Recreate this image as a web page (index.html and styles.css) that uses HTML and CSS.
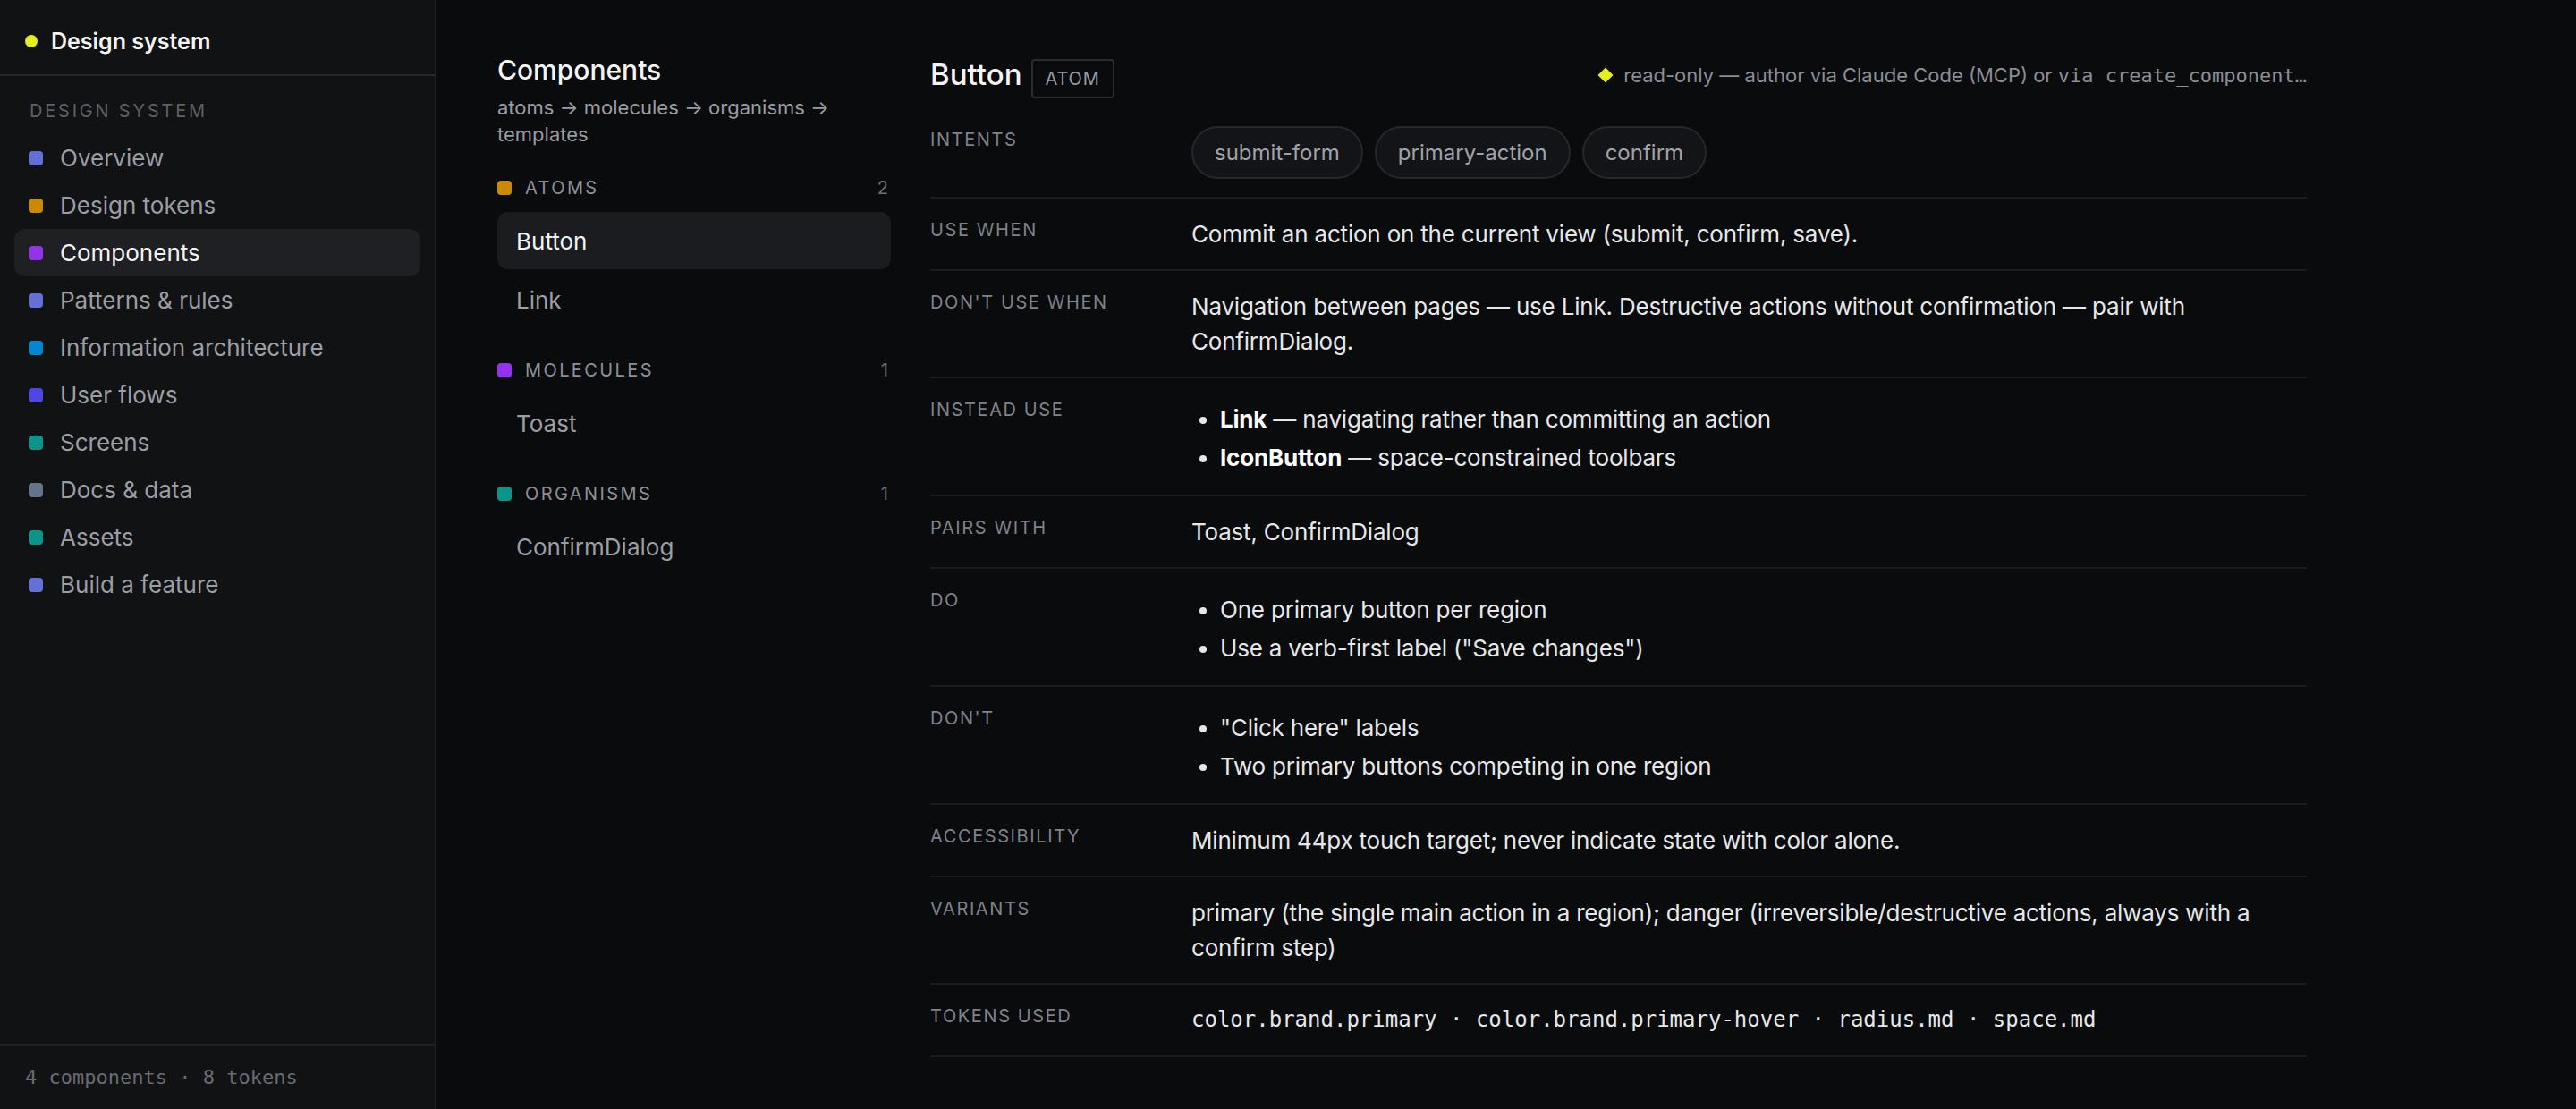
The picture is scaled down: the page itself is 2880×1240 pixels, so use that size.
FILE: index.html
```html
<html>
  <head>
    <link rel="stylesheet" href="styles.css">
  </head>
  <body>
  <aside class="sidebar">
    <div class="brand"><span class="brand-dot"></span>Design system</div>
    <nav class="nav">
      <div class="nav-label">Design system</div>
      <a class="nav-item"><span class="swatch c-indigo"></span>Overview</a>
      <a class="nav-item"><span class="swatch c-amber"></span>Design tokens</a>
      <a class="nav-item is-active"><span class="swatch c-purple"></span>Components</a>
      <a class="nav-item"><span class="swatch c-indigo"></span>Patterns &amp; rules</a>
      <a class="nav-item"><span class="swatch c-sky"></span>Information architecture</a>
      <a class="nav-item"><span class="swatch c-violet"></span>User flows</a>
      <a class="nav-item"><span class="swatch c-teal"></span>Screens</a>
      <a class="nav-item"><span class="swatch c-slate"></span>Docs &amp; data</a>
      <a class="nav-item"><span class="swatch c-teal"></span>Assets</a>
      <a class="nav-item"><span class="swatch c-indigo"></span>Build a feature</a>
    </nav>
    <div class="side-foot">4 components · 8 tokens</div>
  </aside>

  <main class="page">
    <section class="catalog">
      <h2 class="catalog-title">Components</h2>
      <p class="catalog-sub">atoms → molecules → organisms → templates</p>

      <div class="group">
        <div class="group-head"><span class="swatch c-amber"></span>Atoms<span class="group-count">2</span></div>
        <a class="item is-active">Button</a>
        <a class="item">Link</a>
      </div>
      <div class="group">
        <div class="group-head"><span class="swatch c-purple"></span>Molecules<span class="group-count">1</span></div>
        <a class="item">Toast</a>
      </div>
      <div class="group">
        <div class="group-head"><span class="swatch c-teal"></span>Organisms<span class="group-count">1</span></div>
        <a class="item">ConfirmDialog</a>
      </div>
    </section>

    <article class="detail">
      <header class="detail-head">
        <h1 class="detail-title">Button</h1>
        <span class="kind">ATOM</span>
        <div class="meta">
          <span class="diamond"></span>
          <span class="meta-text">read-only — author via Claude Code (MCP) or <code>via create_component…</code></span>
        </div>
      </header>

      <div class="row">
        <div class="row-label">Intents</div>
        <div class="chips">
          <span class="chip">submit-form</span>
          <span class="chip">primary-action</span>
          <span class="chip">confirm</span>
        </div>
      </div>
      <div class="row">
        <div class="row-label">Use when</div>
        <div class="row-value">Commit an action on the current view (submit, confirm, save).</div>
      </div>
      <div class="row">
        <div class="row-label">Don't use when</div>
        <div class="row-value">Navigation between pages — use Link. Destructive actions without confirmation — pair with ConfirmDialog.</div>
      </div>
      <div class="row">
        <div class="row-label">Instead use</div>
        <ul class="row-value bullets">
          <li><strong>Link</strong> — navigating rather than committing an action</li>
          <li><strong>IconButton</strong> — space-constrained toolbars</li>
        </ul>
      </div>
      <div class="row">
        <div class="row-label">Pairs with</div>
        <div class="row-value">Toast, ConfirmDialog</div>
      </div>
      <div class="row">
        <div class="row-label">Do</div>
        <ul class="row-value bullets">
          <li>One primary button per region</li>
          <li>Use a verb-first label ("Save changes")</li>
        </ul>
      </div>
      <div class="row">
        <div class="row-label">Don't</div>
        <ul class="row-value bullets">
          <li>"Click here" labels</li>
          <li>Two primary buttons competing in one region</li>
        </ul>
      </div>
      <div class="row">
        <div class="row-label">Accessibility</div>
        <div class="row-value">Minimum 44px touch target; never indicate state with color alone.</div>
      </div>
      <div class="row">
        <div class="row-label">Variants</div>
        <div class="row-value">primary (the single main action in a region); danger (irreversible/destructive actions, always with a confirm step)</div>
      </div>
      <div class="row">
        <div class="row-label">Tokens used</div>
        <div class="row-value mono">color.brand.primary · color.brand.primary-hover · radius.md · space.md</div>
      </div>
    </article>
  </main>
  </body>
</html>
```

FILE: styles.css
```css
body {
  display: flex;
  margin: 0;
  height: 100vh;
  overflow: hidden;
  background: #0a0b0d;
  color: #e6e7e9;
  font-family: Inter, "Noto Sans", sans-serif;
}

h1, h2, p {
  margin: 0;
  font-weight: inherit;
}

a {
  cursor: pointer;
}

/* sidebar */
.sidebar {
  width: 486px;
  flex: none;
  display: flex;
  flex-direction: column;
  background: #111214;
  border-right: 2px solid #1f2124;
}

.brand {
  height: 85px;
  box-sizing: border-box;
  padding: 8px 0 0 28px;
  display: flex;
  align-items: center;
  gap: 15px;
  border-bottom: 2px solid #25272a;
  font-size: 25px;
  font-weight: 600;
  color: #f4f4f5;
}

.brand-dot {
  width: 14px;
  height: 14px;
  border-radius: 50%;
  background: #e4f01c;
}

.nav {
  flex: 1;
  padding: 24px 16px 0;
}

.nav-label {
  padding-left: 17px;
  margin-bottom: 11px;
  line-height: 30px;
  font-size: 20px;
  letter-spacing: 0.14em;
  text-transform: uppercase;
  color: #5d6067;
}

.nav-item {
  height: 53px;
  display: flex;
  align-items: center;
  gap: 19px;
  padding-left: 16px;
  border-radius: 12px;
  font-size: 26px;
  color: #9b9ea4;
}

.nav-item.is-active {
  background: #1f2023;
  color: #f4f4f5;
}

.swatch {
  width: 16px;
  height: 16px;
  flex: none;
  border-radius: 4px;
}
.c-indigo { background: #6470d6; }
.c-amber { background: #ca8a04; }
.c-purple { background: #9333ea; }
.c-sky { background: #0288d1; }
.c-violet { background: #4f46e5; }
.c-teal { background: #0d9488; }
.c-slate { background: #64748b; }

.side-foot {
  height: 71px;
  display: flex;
  align-items: center;
  padding-left: 28px;
  border-top: 2px solid #1f2124;
  font-family: "DejaVu Sans Mono", monospace;
  font-size: 22px;
  color: #686b72;
}

/* main */
.page {
  flex: 1;
  display: grid;
  grid-template-columns: 440px 1539px;
  column-gap: 44px;
  align-content: start;
  padding: 58px 0 0 68px;
}

.catalog-title {
  font-size: 30px;
  line-height: 40px;
  font-weight: 500;
  color: #f4f4f5;
}

.catalog-sub {
  margin: 7px 0 30px;
  font-size: 22px;
  line-height: 30px;
  color: #9a9ca3;
}

.group {
  margin-bottom: 32px;
}

.group-head {
  height: 30px;
  display: flex;
  align-items: center;
  gap: 15px;
  margin-bottom: 12px;
  font-size: 20px;
  letter-spacing: 0.12em;
  text-transform: uppercase;
  color: #8d9097;
}

.group-count {
  margin-left: auto;
  padding-right: 3px;
  letter-spacing: 0;
  color: #6b6e75;
}

.item {
  height: 64px;
  display: flex;
  align-items: center;
  padding-left: 21px;
  border-radius: 12px;
  font-size: 26px;
  color: #9b9ea4;
}

.item + .item {
  margin-top: 2px;
}

.item.is-active {
  background: #1b1c1f;
  color: #f4f4f5;
}

.detail-head {
  display: flex;
  align-items: baseline;
  gap: 10px;
  padding-top: 5px;
  margin-bottom: 11px;
}

.detail-title {
  font-size: 33px;
  line-height: 40px;
  font-weight: 500;
  color: #f4f4f5;
}

.kind {
  padding: 0 14px;
  line-height: 40px;
  border: 2px solid #2a2c30;
  border-radius: 4px;
  font-size: 20px;
  letter-spacing: 0.04em;
  color: #9a9ca3;
}

.meta {
  margin-left: auto;
  align-self: center;
  margin-bottom: 6px;
  min-width: 0;
  display: flex;
  align-items: center;
  gap: 14px;
  font-size: 22px;
  color: #8b8e95;
}

.diamond {
  width: 12px;
  height: 12px;
  flex: none;
  background: #e4f01c;
  transform: rotate(45deg);
}

.meta-text {
  white-space: nowrap;
}

.meta-text code {
  font-family: "DejaVu Sans Mono", monospace;
  font-size: 22px;
}

.row {
  display: grid;
  grid-template-columns: 292px 1fr;
  padding: 20px 0;
  border-bottom: 2px solid #1b1c1f;
}

.row-label {
  line-height: 30px;
  font-size: 20px;
  letter-spacing: 0.08em;
  text-transform: uppercase;
  color: #7f828a;
}

.row-value {
  font-size: 26px;
  line-height: 39px;
  letter-spacing: -0.2px;
  color: #e6e7e9;
}

.row-value strong {
  font-weight: 700;
  color: #fff;
}

.bullets {
  margin: 0;
  padding: 4px 0 0 32px;
  line-height: 43px;
}

.mono {
  font-family: "DejaVu Sans Mono", monospace;
  font-size: 24px;
  letter-spacing: 0;
}

.chips {
  display: flex;
  flex-wrap: wrap;
  gap: 13px;
}

.chip {
  padding: 10px 24px;
  line-height: 35px;
  font-size: 24px;
  color: #a0a3a9;
  background: #131417;
  border: 2px solid #26282c;
  border-radius: 999px;
}
```
